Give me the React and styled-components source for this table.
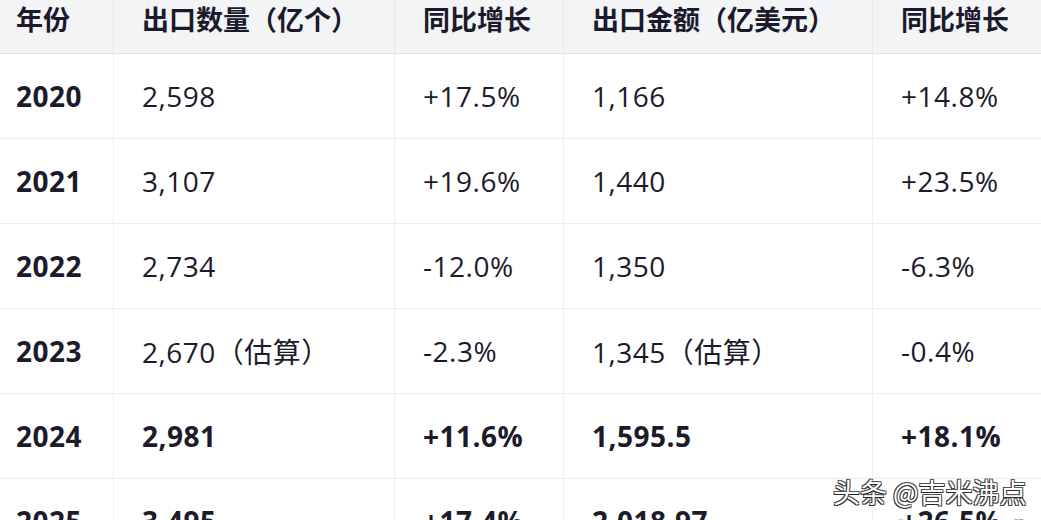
import React from 'react'
import styled, { createGlobalStyle } from 'styled-components'

const GlobalStyle = createGlobalStyle`
  html, body {
    margin: 0;
    padding: 0;
    background: #ffffff;
    overflow: hidden;
  }
  body {
    font-family: "Open Sans", "Noto Sans CJK SC", sans-serif;
    color: #1b1b2b;
  }
`;

const columns = ['年份', '出口数量（亿个）', '同比增长', '出口金额（亿美元）', '同比增长'];

const rows = [
  { year: '2020', qty: '2,598', qtyYoy: '+17.5%', amount: '1,166', amountYoy: '+14.8%' },
  { year: '2021', qty: '3,107', qtyYoy: '+19.6%', amount: '1,440', amountYoy: '+23.5%' },
  { year: '2022', qty: '2,734', qtyYoy: '-12.0%', amount: '1,350', amountYoy: '-6.3%' },
  { year: '2023', qty: '2,670（估算）', qtyYoy: '-2.3%', amount: '1,345（估算）', amountYoy: '-0.4%' },
  { year: '2024', qty: '2,981', qtyYoy: '+11.6%', amount: '1,595.5', amountYoy: '+18.1%', bold: true },
  { year: '2025', qty: '3,495', qtyYoy: '+17.4%', amount: '2,018.97', amountYoy: '+26.5%', bold: true },
];

function App() {
  return (
    <Page>
      <GlobalStyle />
      <Table>
        <HeadRow>
          {columns.map((c, i) => (
            <HeadCell key={i} first={i === 0}>{c}</HeadCell>
          ))}
        </HeadRow>
        {rows.map((r) => (
          <Row key={r.year}>
            <Cell first bold>{r.year}</Cell>
            <Cell bold={r.bold}>{r.qty}</Cell>
            <Cell bold={r.bold}>{r.qtyYoy}</Cell>
            <Cell bold={r.bold}>{r.amount}</Cell>
            <Cell bold={r.bold}>{r.amountYoy}</Cell>
          </Row>
        ))}
      </Table>
      <Watermark>
        <span>头条 @吉米沸点</span>
        <span>头条 @吉米沸点</span>
      </Watermark>
    </Page>
  )
}

export default App

const Page = styled.div`
  position: relative;
  width: 1041px;
  height: 520px;
  overflow: hidden;
`;

const Table = styled.div`
  display: grid;
  grid-template-columns: 113px 281px 169px 309px 1fr;
`;

const HeadRow = styled.div`
  display: contents;
`;

const Row = styled.div`
  display: contents;
`;

const HeadCell = styled.div`
  height: 54px;
  box-sizing: border-box;
  padding: 0 0 16px ${(p) => (p.first ? '16px' : '28px')};
  display: flex;
  align-items: center;
  background: #f3f4f6;
  border-bottom: 1px solid #e3e4e8;
  border-left: ${(p) => (p.first ? 'none' : '1px solid #e6e7ea')};
  font-family: "Noto Sans CJK SC", sans-serif;
  font-size: 27px;
  font-weight: 700;
  color: #1a1a2c;
  white-space: nowrap;
`;

const Cell = styled.div`
  height: 85px;
  box-sizing: border-box;
  padding-left: ${(p) => (p.first ? '16px' : '28px')};
  display: flex;
  align-items: center;
  border-bottom: 1px solid #ececee;
  border-left: ${(p) => (p.first ? 'none' : '1px solid #efeff1')};
  font-size: 28px;
  letter-spacing: 0.5px;
  font-weight: ${(p) => (p.bold ? 700 : 400)};
  color: #1b1b2b;
  white-space: nowrap;
`;

const Watermark = styled.div`
  position: absolute;
  left: 833px;
  top: 472px;
  display: flex;
  flex-direction: column;
  gap: 2px;
  font-family: "Noto Sans CJK SC", sans-serif;
  font-size: 27px;
  color: #ffffff;
  text-shadow:
    -1px 1px 0 #2a2a2a, 1px -1px 0 #555, -1px -1px 0 #444, 1px 1px 0 #333;
  white-space: nowrap;

  span:last-child {
    padding-left: 30px;
  }
`;
